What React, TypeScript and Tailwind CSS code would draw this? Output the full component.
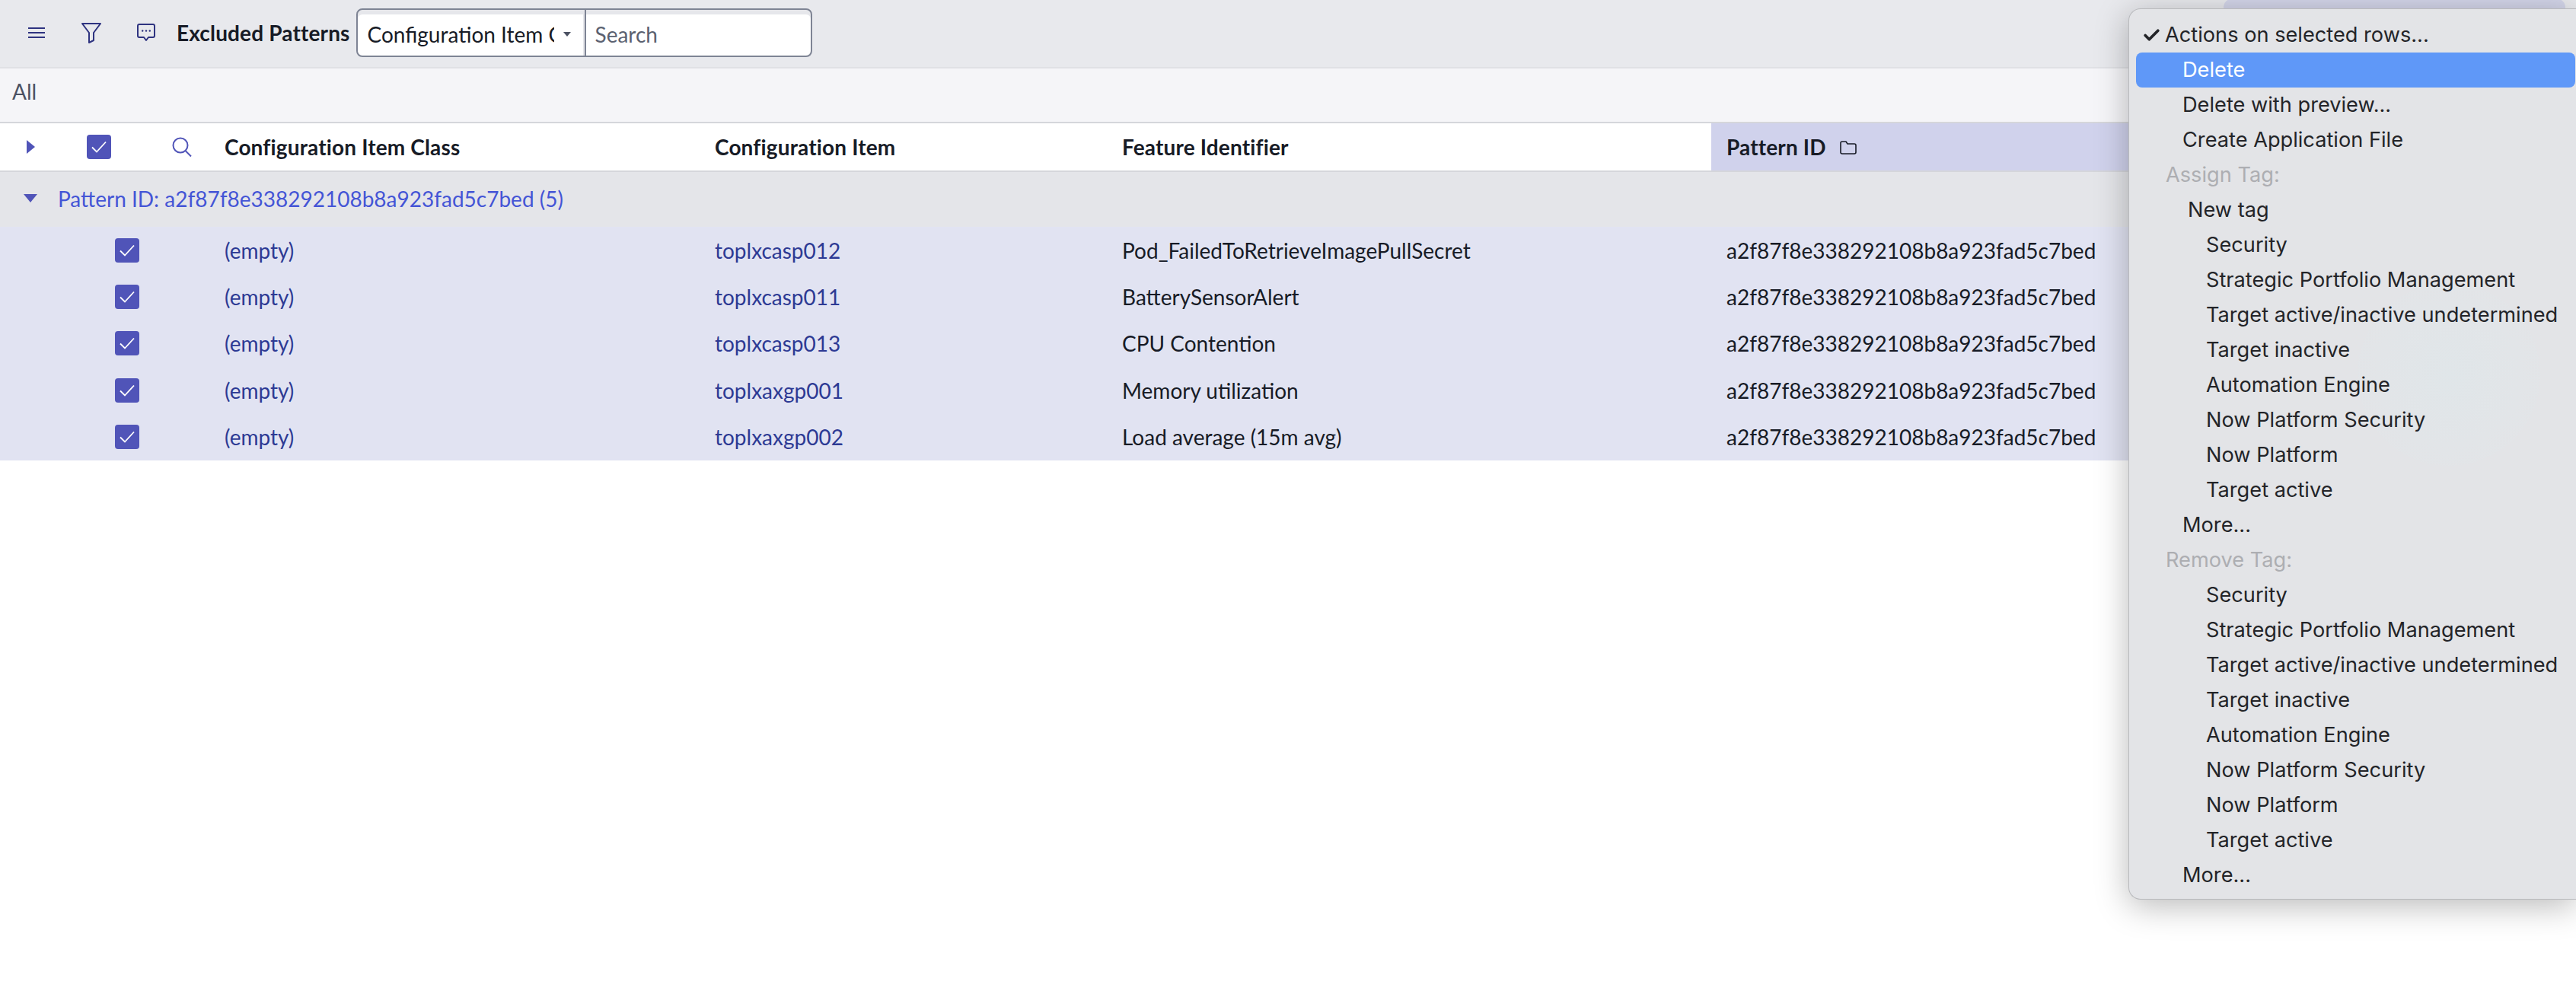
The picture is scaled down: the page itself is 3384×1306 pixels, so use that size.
import { Check } from "lucide-react";

const rows = [
  { item: "toplxcasp012", feature: "Pod_FailedToRetrieveImagePullSecret" },
  { item: "toplxcasp011", feature: "BatterySensorAlert" },
  { item: "toplxcasp013", feature: "CPU Contention" },
  { item: "toplxaxgp001", feature: "Memory utilization" },
  { item: "toplxaxgp002", feature: "Load average (15m avg)" },
];

const tags = [
  "Security",
  "Strategic Portfolio Management",
  "Target active/inactive undetermined",
  "Target inactive",
  "Automation Engine",
  "Now Platform Security",
  "Now Platform",
  "Target active",
];

const patternId = "a2f87f8e338292108b8a923fad5c7bed";

function CheckBox({ className }: { className: string }) {
  return (
    <div className={`flex h-8 w-8 items-center justify-center rounded-[4px] bg-[#5054b8] ${className}`}>
      <svg width="22" height="18" viewBox="0 0 22 18" fill="none" stroke="#ffffff" strokeWidth="1.8">
        <path d="M2 9.5 8 15.5 20 2.5" />
      </svg>
    </div>
  );
}

function MenuItem({ label, indent }: { label: string; indent: string }) {
  return <div className={`flex h-[46px] items-center whitespace-nowrap text-[#232428] ${indent}`}>{label}</div>;
}

function ActionsMenu() {
  return (
    <div className="absolute top-[11px] right-0 bottom-[124px] left-[2796px] overflow-hidden rounded-l-[16px] border border-r-0 border-[#b9babd] bg-[#e3e4e7] pt-[11px] font-['Inter',sans-serif] text-[27.2px] shadow-[0_8px_44px_rgba(0,0,0,0.28)]">
      <div className="absolute top-[360px] left-[300px] h-[240px] w-[240px] rounded-full bg-[radial-gradient(circle,#e0e6e9_0%,#e2e5e8_55%,#e3e4e7_100%)]" />
      <div className="relative">
        <div className="flex h-[46px] items-center pl-[17px] text-[#232428]">
          <Check className="mr-[5px] h-[25px] w-[25px]" strokeWidth={3.6} />
          <span>Actions on selected rows...</span>
        </div>
        <div className="mr-[1px] ml-[9px] flex h-[46px] items-center rounded-[8px] bg-[#5f98f8] pl-[61px] text-white">Delete</div>
        <MenuItem label="Delete with preview..." indent="pl-[70px]" />
        <MenuItem label="Create Application File" indent="pl-[70px]" />
        <div className="flex h-[46px] items-center pl-[48px] text-[#adaeb2]">Assign Tag:</div>
        <MenuItem label="New tag" indent="pl-[77px]" />
        {tags.map((tag) => (
          <MenuItem key={"a" + tag} label={tag} indent="pl-[101px]" />
        ))}
        <MenuItem label="More..." indent="pl-[70px]" />
        <div className="flex h-[46px] items-center pl-[48px] text-[#adaeb2]">Remove Tag:</div>
        {tags.map((tag) => (
          <MenuItem key={"r" + tag} label={tag} indent="pl-[101px]" />
        ))}
        <MenuItem label="More..." indent="pl-[70px]" />
      </div>
    </div>
  );
}

export default function App() {
  return (
    <div className="relative h-[1306px] w-full overflow-hidden bg-white font-['Lato',sans-serif] text-[28px] text-[#171b26]">
      {/* top bar */}
      <div className="flex h-[90px] items-center border-b-2 border-[#e0e1e5] bg-[#e8e9ed] pb-[2px]">
        <svg className="ml-[37px] h-[14px] w-[22px]" viewBox="0 0 22 14" fill="none" stroke="#2e3380" strokeWidth="2">
          <path d="M0 1h22M0 7h22M0 13h22" />
        </svg>
        <svg className="ml-[48px] h-[27px] w-[26px]" viewBox="0 0 26 27" fill="none" stroke="#2e3380" strokeWidth="2" strokeLinejoin="round">
          <path d="M1 1h24L16 13v10l-6 3V13z" />
        </svg>
        <svg className="ml-[47px] h-[24px] w-[24px]" viewBox="0 0 24 24" fill="none" stroke="#2e3380" strokeWidth="2" strokeLinejoin="round">
          <path d="M3 1h18a2 2 0 0 1 2 2v13a2 2 0 0 1-2 2h-6l-3 4-3-4H3a2 2 0 0 1-2-2V3a2 2 0 0 1 2-2z" />
          <circle cx="7.2" cy="9.5" r="1.2" fill="#2e3380" stroke="none" />
          <circle cx="12" cy="9.5" r="1.2" fill="#2e3380" stroke="none" />
          <circle cx="16.8" cy="9.5" r="1.2" fill="#2e3380" stroke="none" />
        </svg>
        <h1 className="ml-[28px] text-[28px] font-bold tracking-[0.15px] whitespace-nowrap">Excluded Patterns</h1>
        <div className="ml-[8px] flex h-[64px] w-[599px] overflow-hidden rounded-[8px] border-2 border-[#7e8494] bg-white shadow-[inset_0_6px_0_#e6e7eb]">
          <div className="flex w-[298px] items-center border-r-2 border-[#e6e7eb] pt-[3px] pl-[13px]">
            <span className="w-[245px] overflow-hidden whitespace-nowrap">Configuration Item Class</span>
            <div className="ml-[12px] h-0 w-0 border-x-[5px] border-t-[6px] border-x-transparent border-t-[#4b5162]" />
          </div>
          <div className="flex flex-1 items-center border-l-2 border-[#7e8494] pt-[3px] pl-[12px] text-[#5b6170]">Search</div>
        </div>
        <div className="mr-[14px] mb-[70px] ml-auto h-[20px] w-[449px] rounded-t-[12px] bg-[#d3d5e9]" />
      </div>

      {/* list title */}
      <div className="flex h-[72px] items-center border-b-2 border-[#d5d6db] bg-[#f5f5f8] pb-[10px] pl-[16px] text-[#4b5162]">All</div>

      {/* column header */}
      <div className="grid h-[64px] grid-cols-[275px_644px_535px_794px_1fr] border-b-2 border-[#d5d6db] font-bold tracking-[0.15px]">
        <div className="flex items-center">
          <div className="ml-[35px] h-0 w-0 border-y-[9px] border-l-[11px] border-y-transparent border-l-[#5054b8]" />
          <CheckBox className="ml-[68px]" />
          <svg className="ml-[80px] h-[26px] w-[26px]" viewBox="0 0 26 26" fill="none" stroke="#5054b8" strokeWidth="2">
            <circle cx="11" cy="11" r="9.5" />
            <path d="M17.5 18 25 25.5" />
          </svg>
        </div>
        <div className="flex items-center px-5">Configuration Item Class</div>
        <div className="flex items-center px-5">Configuration Item</div>
        <div className="flex items-center px-5">Feature Identifier</div>
        <div className="flex items-center bg-[#d0d2ec] px-5">
          <span>Pattern ID</span>
          <svg className="mt-[2px] ml-[18px] h-[18px] w-[22px]" viewBox="0 0 22 18" fill="none" stroke="#171b26" strokeWidth="1.6" strokeLinejoin="round">
            <path d="M1 3a2 2 0 0 1 2-2h5l2 3h9a2 2 0 0 1 2 2v9a2 2 0 0 1-2 2H3a2 2 0 0 1-2-2z" />
          </svg>
        </div>
      </div>

      {/* group row */}
      <div className="flex h-[72px] items-center bg-[#e4e5e9] pb-[3px] text-[#4455d6]">
        <div className="ml-[31px] h-0 w-0 border-x-[9px] border-t-[11px] border-x-transparent border-t-[#5054b8]" />
        <span className="ml-[27px]">Pattern ID: {patternId} (5)</span>
      </div>

      {/* rows */}
      {rows.map((row) => (
        <div key={row.item} className="grid h-[61.4px] grid-cols-[275px_644px_535px_794px_1fr] items-center bg-[#e1e3f2]">
          <div className="flex items-center">
            <CheckBox className="ml-[151px]" />
          </div>
          <div className="px-5 text-[#2d3a94]">(empty)</div>
          <div className="px-5 text-[#2d3a94]">{row.item}</div>
          <div className="px-5">{row.feature}</div>
          <div className="px-5">{patternId}</div>
        </div>
      ))}

      <ActionsMenu />
    </div>
  );
}
